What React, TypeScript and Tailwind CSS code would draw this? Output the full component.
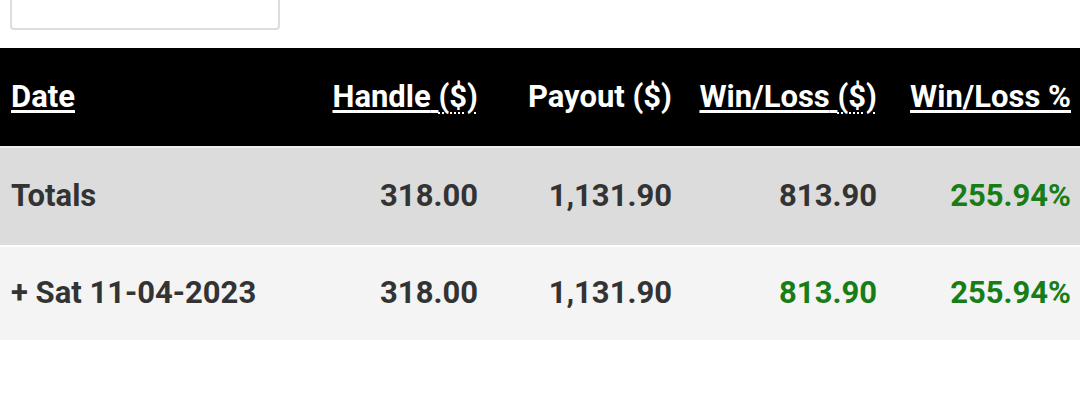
import React from 'react';

const font = { fontFamily: 'Roboto, "Liberation Sans", sans-serif' };

function Money({ children }: { children: React.ReactNode }) {
  return (
    <>
      <span className="underline decoration-[3px] underline-offset-[3px]">{children} </span>
      <abbr className="underline decoration-dotted decoration-2 underline-offset-[6px]" title="dollars">
        ($)
      </abbr>
    </>
  );
}

const rows = [
  { label: 'Totals', handle: '318.00', payout: '1,131.90', win: '813.90', pct: '255.94%', winGreen: false, bg: 'bg-[#dcdcdc]' },
  { label: '+ Sat 11-04-2023', handle: '318.00', payout: '1,131.90', win: '813.90', pct: '255.94%', winGreen: true, bg: 'bg-[#f4f4f4]' },
];

export default function App() {
  return (
    <div className="w-[1080px] h-[405px] bg-white overflow-hidden" style={font}>
      <div className="ml-[10px] w-[270px] h-[30px] border-2 border-t-0 border-[#dddddd] rounded-b-[4px] bg-white" />
      <div className="mt-[18px]">
        <div className="grid grid-cols-[322px_165px_194px_205px_194px] bg-black text-white font-bold text-[31px] h-[100px] items-center border-b-2 border-[#eeeeee]">
          <div className="pl-[11px]">
            <span className="underline decoration-[3px] underline-offset-[3px]">Date</span>
          </div>
          <div className="text-right pr-[9px]">
            <Money>Handle</Money>
          </div>
          <div className="text-right pr-[9px]">Payout ($)</div>
          <div className="text-right pr-[9px]">
            <Money>Win/Loss</Money>
          </div>
          <div className="text-right pr-[9px]">
            <span className="underline decoration-[3px] underline-offset-[3px]">Win/Loss %</span>
          </div>
        </div>
        {rows.map((r, i) => (
          <div
            key={r.label}
            className={`grid grid-cols-[322px_165px_194px_205px_194px] items-center font-bold text-[31px] text-[#333333] ${r.bg} ${
              i === 0 ? 'h-[99px] border-b-2 border-white' : 'h-[93px]'
            }`}
          >
            <div className="pl-[11px]">{r.label}</div>
            <div className="text-right pr-[9px]">{r.handle}</div>
            <div className="text-right pr-[9px]">{r.payout}</div>
            <div className={`text-right pr-[9px] ${r.winGreen ? 'text-[#177d17]' : ''}`}>{r.win}</div>
            <div className="text-right pr-[9px] text-[#177d17]">{r.pct}</div>
          </div>
        ))}
      </div>
    </div>
  );
}
